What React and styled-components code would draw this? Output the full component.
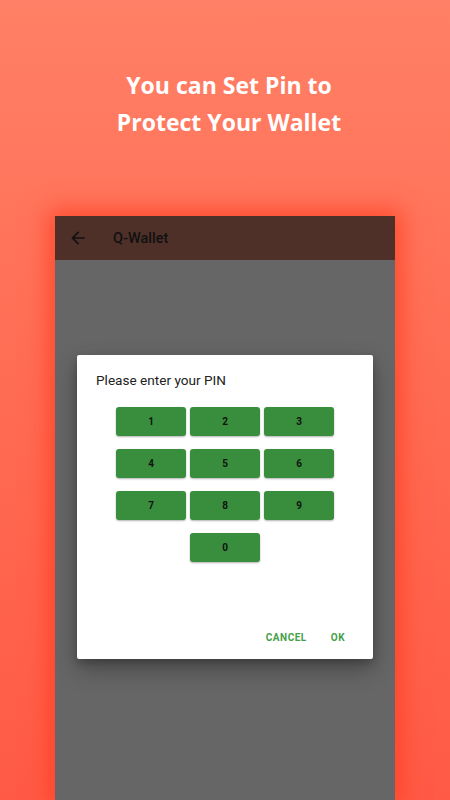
import React from "react";
import styled, { createGlobalStyle } from "styled-components";

const GlobalStyle = createGlobalStyle`
  html, body {
    margin: 0;
    padding: 0;
  }
  body {
    width: 450px;
    height: 800px;
    overflow: hidden;
  }
`;

const keys = ["1", "2", "3", "4", "5", "6", "7", "8", "9", "0"];

const App = () => {
  return (
    <Page>
      <GlobalStyle />
      <Headline>
        You can Set Pin to
        <br />
        Protect Your Wallet
      </Headline>
      <Phone>
        <AppBar>
          <svg width="20" height="20" viewBox="0 0 24 24">
            <path
              d="M20 11H7.83l5.59-5.59L12 4l-8 8 8 8 1.41-1.41L7.83 13H20v-2z"
              fill="#111"
            />
          </svg>
          <Title>Q-Wallet</Title>
        </AppBar>
        <Screen>
          <Dialog>
            <DialogTitle>Please enter your PIN</DialogTitle>
            <Keypad>
              {keys.map((k) => (
                <Key key={k} $zero={k === "0"}>
                  {k}
                </Key>
              ))}
            </Keypad>
            <Actions>
              <TextButton>Cancel</TextButton>
              <TextButton>OK</TextButton>
            </Actions>
          </Dialog>
        </Screen>
      </Phone>
    </Page>
  );
};

const Page = styled.div`
  width: 450px;
  height: 800px;
  overflow: hidden;
  display: flex;
  flex-direction: column;
  align-items: center;
  background: linear-gradient(180deg, #ff8066 0%, #ff6d55 45%, #ff5a45 100%);
`;

const Headline = styled.h1`
  margin: 0;
  padding: 67px 0 0 8px;
  height: 216px;
  flex-shrink: 0;
  box-sizing: border-box;
  font-family: "Open Sans", sans-serif;
  font-weight: 700;
  font-size: 23px;
  line-height: 37px;
  color: #fff;
  text-align: center;
`;

const Phone = styled.div`
  width: 340px;
  flex: 1;
  display: flex;
  flex-direction: column;
  box-shadow: 0 0 22px 6px rgba(255, 60, 30, 0.75);
  font-family: Roboto, "Noto Sans", sans-serif;
`;

const AppBar = styled.div`
  height: 44px;
  flex-shrink: 0;
  background: #4e3029;
  display: flex;
  align-items: center;
  padding-left: 13px;
  gap: 25px;
  svg {
    display: block;
  }
`;

const Title = styled.div`
  font-size: 14.5px;
  font-weight: 500;
  color: #111;
`;

const Screen = styled.div`
  flex: 1;
  background: #666666;
  padding: 95px 22px 0;
`;

const Dialog = styled.div`
  background: #fff;
  border-radius: 2px;
  box-shadow: 0 10px 24px rgba(0, 0, 0, 0.3), 0 4px 8px rgba(0, 0, 0, 0.2);
  padding: 15px 20px 4px 19px;
  display: flex;
  flex-direction: column;
`;

const DialogTitle = styled.div`
  font-size: 13.6px;
  line-height: 20px;
  color: #222;
`;

const Keypad = styled.div`
  display: grid;
  grid-template-columns: repeat(3, 70px);
  column-gap: 4px;
  row-gap: 13px;
  justify-content: center;
  margin: 17px 0 0 1px;
`;

const Key = styled.button`
  grid-column: ${(p) => (p.$zero ? "2" : "auto")};
  height: 29px;
  border: none;
  border-radius: 3px;
  background: #388e3c;
  box-shadow: 0 1px 2px rgba(0, 0, 0, 0.3);
  font-family: Roboto, sans-serif;
  font-weight: 700;
  font-size: 10px;
  color: #111;
  padding: 0;
`;

const Actions = styled.div`
  display: flex;
  justify-content: flex-end;
  gap: 8px;
  margin-top: 57px;
`;

const TextButton = styled.button`
  height: 36px;
  padding: 0 8px;
  border: none;
  background: none;
  font-family: Roboto, sans-serif;
  font-weight: 700;
  font-size: 10px;
  letter-spacing: 0.5px;
  text-transform: uppercase;
  color: #43a047;
`;

export default App;
